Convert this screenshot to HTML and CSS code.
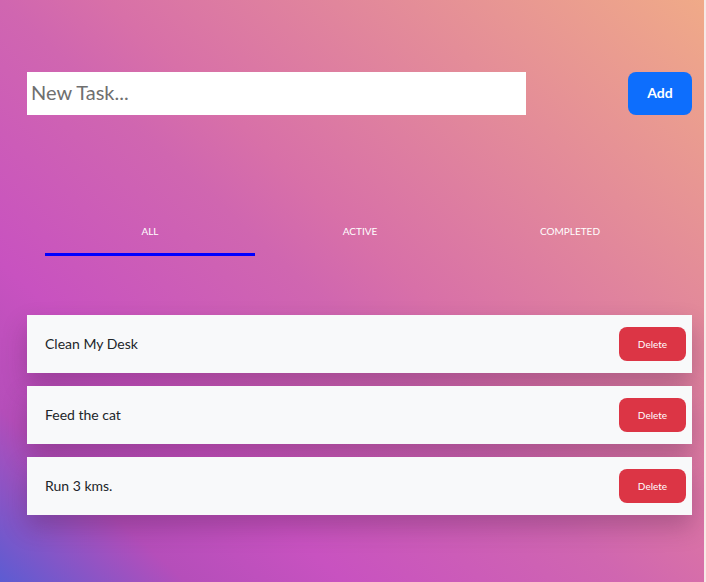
FILE: index.html
```html
<!DOCTYPE html>
<html>
<head>
<meta charset="utf-8">
<link rel="stylesheet" href="styles.css">
</head>
<body>
<div class="app">
  <div class="new-task">
    <input class="task-input" type="text" placeholder="New Task...">
    <button class="add-btn">Add</button>
  </div>
  <div class="tabs">
    <div class="tab active">ALL</div>
    <div class="tab">ACTIVE</div>
    <div class="tab">COMPLETED</div>
  </div>
  <ul class="list">
    <li class="item"><span class="item-text">Clean My Desk</span><button class="del-btn">Delete</button></li>
    <li class="item"><span class="item-text">Feed the cat</span><button class="del-btn">Delete</button></li>
    <li class="item"><span class="item-text">Run 3 kms.</span><button class="del-btn">Delete</button></li>
  </ul>
</div>
</body>
</html>
```
FILE: styles.css
```css
html {
  height: 100%;
  background: #f6e9e6;
}
body {
  margin: 0 2px 0 0;
  height: 100%;
  background: linear-gradient(43deg, #5c5cd2 0%, #b54eba 14%, #c852c0 26%, #d066b0 47%, #d870a8 55%, #f0aa88 100%);
  font-family: Lato, "Open Sans", sans-serif;
  overflow: hidden;
}
.app {
  padding: 72px 12px 0 27px;
}
.new-task {
  display: flex;
  justify-content: space-between;
  align-items: stretch;
  height: 43px;
}
.task-input {
  width: 499px;
  border: none;
  outline: none;
  background: #fff;
  font-family: Lato, sans-serif;
  font-size: 20px;
  padding: 0 4px 3px;
  box-sizing: border-box;
  color: #333;
}
.task-input::placeholder {
  color: #6f6f6f;
}
.add-btn {
  width: 64px;
  border: none;
  border-radius: 8px;
  background: #0d6efd;
  color: #fff;
  font-family: Lato, sans-serif;
  font-size: 14px;
  font-weight: 700;
  padding: 0 0 3px;
}
.tabs {
  display: flex;
  margin: 0 0 0 18px;
  padding-top: 108px;
}
.tab {
  width: 210px;
  text-align: center;
  color: #fff;
  font-size: 10px;
  height: 33px;
  line-height: 16px;
  box-sizing: border-box;
}
.tab.active {
  border-bottom: 3px solid #0000ff;
}
.list {
  list-style: none;
  margin: 59px 0 0 0;
  padding: 0;
  display: flex;
  flex-direction: column;
  gap: 13px;
}
.item {
  display: flex;
  align-items: center;
  justify-content: space-between;
  height: 58px;
  background: #f8f9fa;
  padding: 0 6px 0 18px;
  box-shadow: 0 12px 24px rgba(60, 20, 60, 0.28);
}
.item-text {
  font-size: 14px;
  color: #212529;
  padding-bottom: 2px;
}
.del-btn {
  width: 67px;
  height: 34px;
  border: none;
  border-radius: 8px;
  background: #dc3545;
  color: #fff;
  font-family: Lato, sans-serif;
  font-size: 10px;
}
```
